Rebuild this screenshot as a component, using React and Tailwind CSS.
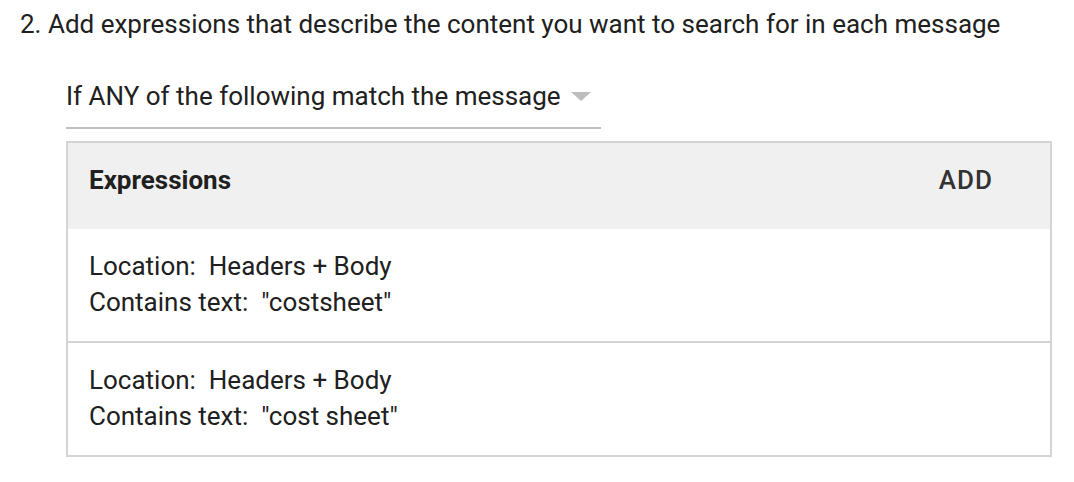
const rows = [
  { location: "Headers + Body", text: '"costsheet"' },
  { location: "Headers + Body", text: '"cost sheet"' },
];

const App = () => {
  return (
    <div className="min-h-screen bg-white text-[#202020] font-['Roboto',sans-serif]">
      <div className="pl-[20px] pt-[8px]">
        <h2 className="text-[26px] leading-[32px] font-normal">
          2. Add expressions that describe the content you want to search for in each message
        </h2>
      </div>

      <div className="ml-[66px] mt-[40px] w-[535px] border-b-2 border-[#bdbdbd] pb-[15px]">
        <div className="flex items-center gap-[10px]">
          <span className="text-[26px] leading-[32px]">If ANY of the following match the message</span>
          <svg width="20" height="10" viewBox="0 0 20 10" className="mt-[2px]">
            <path d="M0 0 L20 0 L10 9 Z" fill="#bdbdbd" />
          </svg>
        </div>
      </div>

      <div className="ml-[66px] mt-[12px] w-[986px] border-2 border-[#d4d4d4]">
        <div className="flex items-start justify-between bg-[#f0f0f0] h-[86px] pt-[21px] pl-[21px] pr-[57px]">
          <span className="text-[26px] leading-[32px] font-bold">Expressions</span>
          <button className="text-[26px] leading-[32px] font-medium tracking-[1px] text-[#333]">ADD</button>
        </div>
        {rows.map((r, i) => (
          <div
            key={i}
            className={`pt-[19px] pl-[21px] text-[26px] leading-[36px] ${i > 0 ? "h-[114px] border-t-2 border-[#d4d4d4]" : "h-[112px]"}`}
          >
            <div>Location:&nbsp; {r.location}</div>
            <div>Contains text:&nbsp; {r.text}</div>
          </div>
        ))}
      </div>
    </div>
  );
};

export default App;
